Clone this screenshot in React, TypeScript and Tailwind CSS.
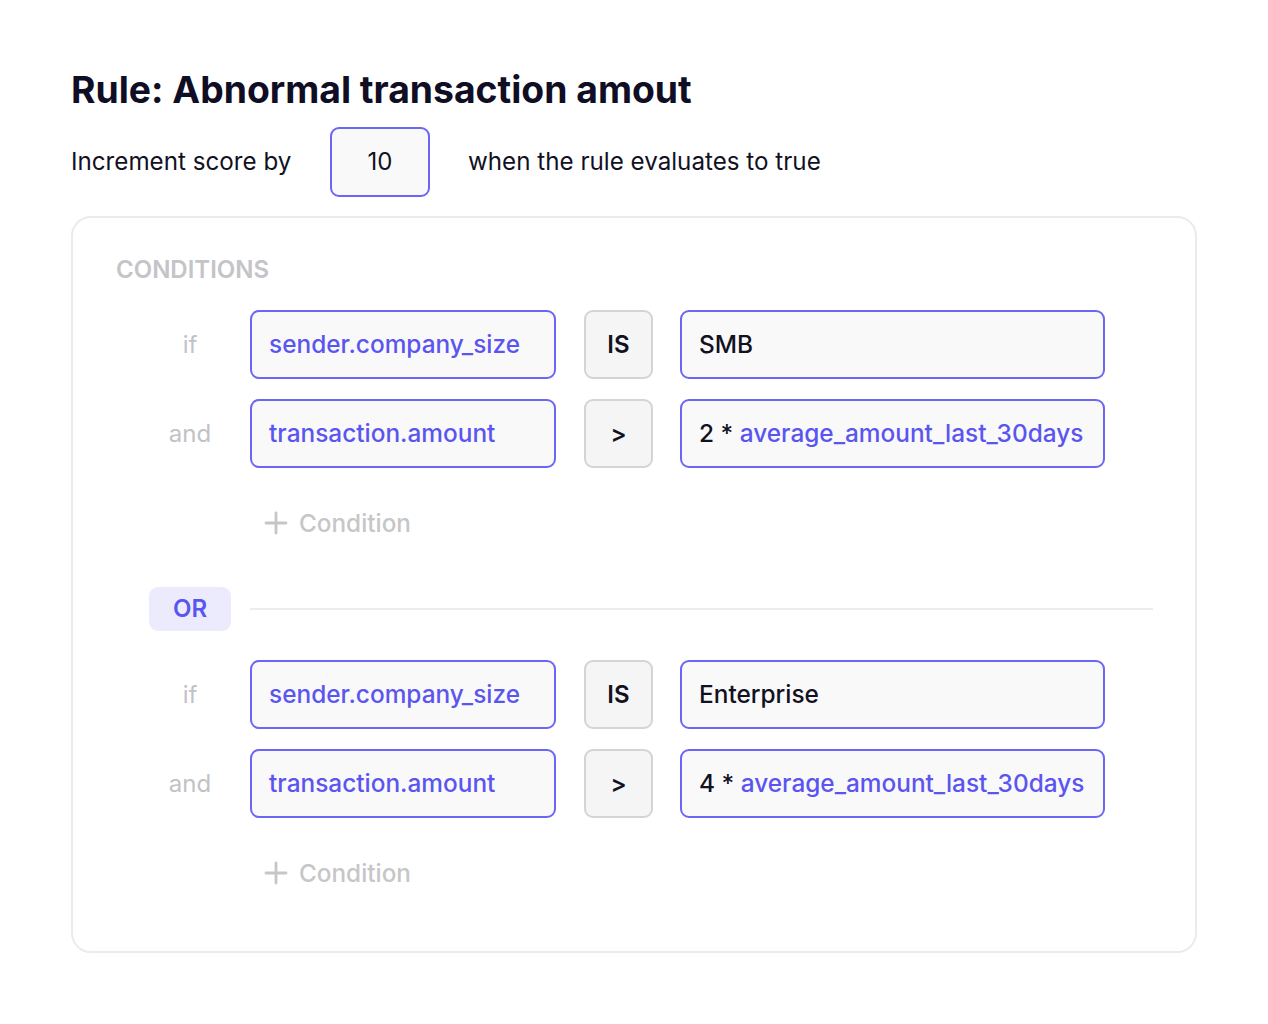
import React from 'react';

type Cond = {
  label: string;
  field: string;
  op: string;
  mult?: string;
  value: string;
  valueIsField?: boolean;
};

const groups: Cond[][] = [
  [
    { label: 'if', field: 'sender.company_size', op: 'IS', value: 'SMB' },
    { label: 'and', field: 'transaction.amount', op: '>', mult: '2 * ', value: 'average_amount_last_30days', valueIsField: true },
  ],
  [
    { label: 'if', field: 'sender.company_size', op: 'IS', value: 'Enterprise' },
    { label: 'and', field: 'transaction.amount', op: '>', mult: '4 * ', value: 'average_amount_last_30days', valueIsField: true },
  ],
];

const PlusIcon = () => (
  <svg width="24" height="24" viewBox="0 0 24 24" fill="none" stroke="#c6c6c8" strokeWidth="2.8" strokeLinecap="round">
    <path d="M12 2v20M2 12h20" />
  </svg>
);

const ConditionRow: React.FC<{ c: Cond }> = ({ c }) => (
  <div className="flex items-center">
    <div className="w-[82px] text-center text-[24px] text-[#c2c2c6]">{c.label}</div>
    <div className="ml-[19px] w-[306px] h-[69px] flex items-center px-[17px] rounded-[9px] border-2 border-[#6b66f5] bg-[#f9f9fa] text-[24.4px] font-medium text-[#5b55f0]">
      {c.field}
    </div>
    <div className="ml-[28px] w-[69px] h-[69px] flex items-center justify-center rounded-[9px] border-2 border-[#d4d4d8] bg-[#f5f5f6] text-[24px] font-semibold text-[#12111f]">
      {c.op}
    </div>
    <div className="ml-[27px] w-[425px] h-[69px] flex items-center px-[17px] rounded-[9px] border-2 border-[#6b66f5] bg-[#f9f9fa] text-[24.4px] font-medium text-[#12111f]">
      {c.mult && <span className="whitespace-pre">{c.mult}</span>}
      <span className={c.valueIsField ? 'text-[#5b55f0]' : ''}>{c.value}</span>
    </div>
  </div>
);

const AddCondition = () => (
  <div className="ml-[115px] h-[44px] flex items-center gap-[11px] text-[24.3px] font-medium text-[#c6c6c8]">
    <PlusIcon />
    <span>Condition</span>
  </div>
);

export default function App() {
  return (
    <div className="min-h-screen bg-white pl-[71px] pt-[66px] text-[#12111f]" style={{ fontFamily: 'Inter, "Noto Sans", sans-serif' }}>
      <h1 className="text-[37.3px] leading-[47px] font-bold text-[#0f0e24]">Rule: Abnormal transaction amout</h1>

      <div className="mt-[14px] flex items-center text-[24.2px]">
        <span className="w-[259px]">Increment score by</span>
        <div className="w-[100px] h-[70px] flex items-center justify-center rounded-[9px] border-2 border-[#6b66f5] bg-[#f9f9fa] text-[24px]">
          10
        </div>
        <span className="ml-[38px]">when the rule evaluates to true</span>
      </div>

      <div className="mt-[19px] w-[1126px] rounded-[20px] border-2 border-[#ebebec] pt-[37px] pb-[56px] pl-[43px] pr-[42px]">
        <div className="text-[24px] leading-[30px] font-semibold text-[#c4c4c9]">CONDITIONS</div>

        <div className="mt-[25px] ml-[33px] flex flex-col">
          {groups.map((g, gi) => (
            <React.Fragment key={gi}>
              {gi > 0 && (
                <div className="mt-[42px] mb-[29px] flex items-center">
                  <div className="w-[82px] h-[44px] flex items-center justify-center rounded-[9px] bg-[#ecebfe] text-[24px] font-semibold text-[#5b55f0]">
                    OR
                  </div>
                  <div className="ml-[19px] flex-1 h-[2px] bg-[#ececee]" />
                </div>
              )}
              <div className="flex flex-col gap-[20px]">
                {g.map((c, ci) => (
                  <ConditionRow key={ci} c={c} />
                ))}
              </div>
              <div className="mt-[33px]">
                <AddCondition />
              </div>
            </React.Fragment>
          ))}
        </div>
      </div>
    </div>
  );
}
